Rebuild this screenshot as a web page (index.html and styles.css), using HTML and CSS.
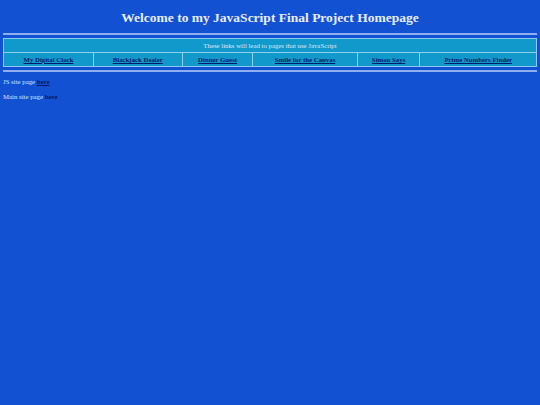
FILE: index.html
```html
<!DOCTYPE html>
<html>
<head>
<meta charset="utf-8">
<title>JavaScript Final Project</title>
<link rel="stylesheet" href="styles.css">
</head>
<body>
<h1 class="title">Welcome to my JavaScript Final Project Homepage</h1>
<hr class="rule">
<table class="links">
<colgroup>
<col class="c1"><col class="c2"><col class="c3"><col class="c4"><col class="c5"><col class="c6">
</colgroup>
<tr><td class="caption" colspan="6">These links will lead to pages that use JavaScript</td></tr>
<tr>
<td><a href="#">My Digital Clock</a></td>
<td><a href="#">Blackjack Dealer</a></td>
<td><a href="#">Dinner Guest</a></td>
<td><a href="#">Smile for the Canvas</a></td>
<td><a href="#">Simon Says</a></td>
<td><a href="#">Prime Numbers Finder</a></td>
</tr>
</table>
<hr class="rule">
<p class="line first">JS site page <a href="#">here</a></p>
<p class="line">Main site page <a href="#">here</a></p>
</body>
</html>
```
FILE: styles.css
```css
html { background: #1351d3; }
body {
  margin: 0 3px;
  background: #1351d3;
  color: #d8e4ff;
  font-family: "Liberation Serif", serif;
  font-size: 6.8px;
}
.title {
  font-size: 13.5px;
  font-weight: bold;
  text-align: center;
  margin: 0;
  padding-top: 10px;
  height: 23px;
  color: #e8eeff;
}
.rule {
  border: none;
  border-top: 1px solid #8fb0f0;
  border-bottom: 1px solid #8fb0f0;
  height: 0;
  margin: 0;
}
.links {
  width: 100%;
  table-layout: fixed;
  border-collapse: separate;
  border-spacing: 0;
  border: 1px solid #8fc8f0;
  margin: 3px 0;
}
.links td {
  background: #1199cc;
  text-align: center;
  height: 13px;
  padding: 0;
  border-left: 1px solid #8fd0f0;
  border-top: 1px solid #8fd0f0;
}
.links tr:first-child td { border-top: none; }
.links td:first-child { border-left: none; }
.links .c1 { width: 16.7%; }
.links .c2 { width: 16.7%; }
.links .c3 { width: 13.3%; }
.links .c4 { width: 19.6%; }
.links .c5 { width: 11.8%; }
.links .c6 { width: 21.9%; }
.links td.caption { color: #d8ecff; }
.links a {
  color: #001c66;
  font-weight: bold;
}
.line { margin: 8px 0 0; }
.line.first { margin-top: 6px; }
.line a { color: #001a66; font-weight: bold; }
```
